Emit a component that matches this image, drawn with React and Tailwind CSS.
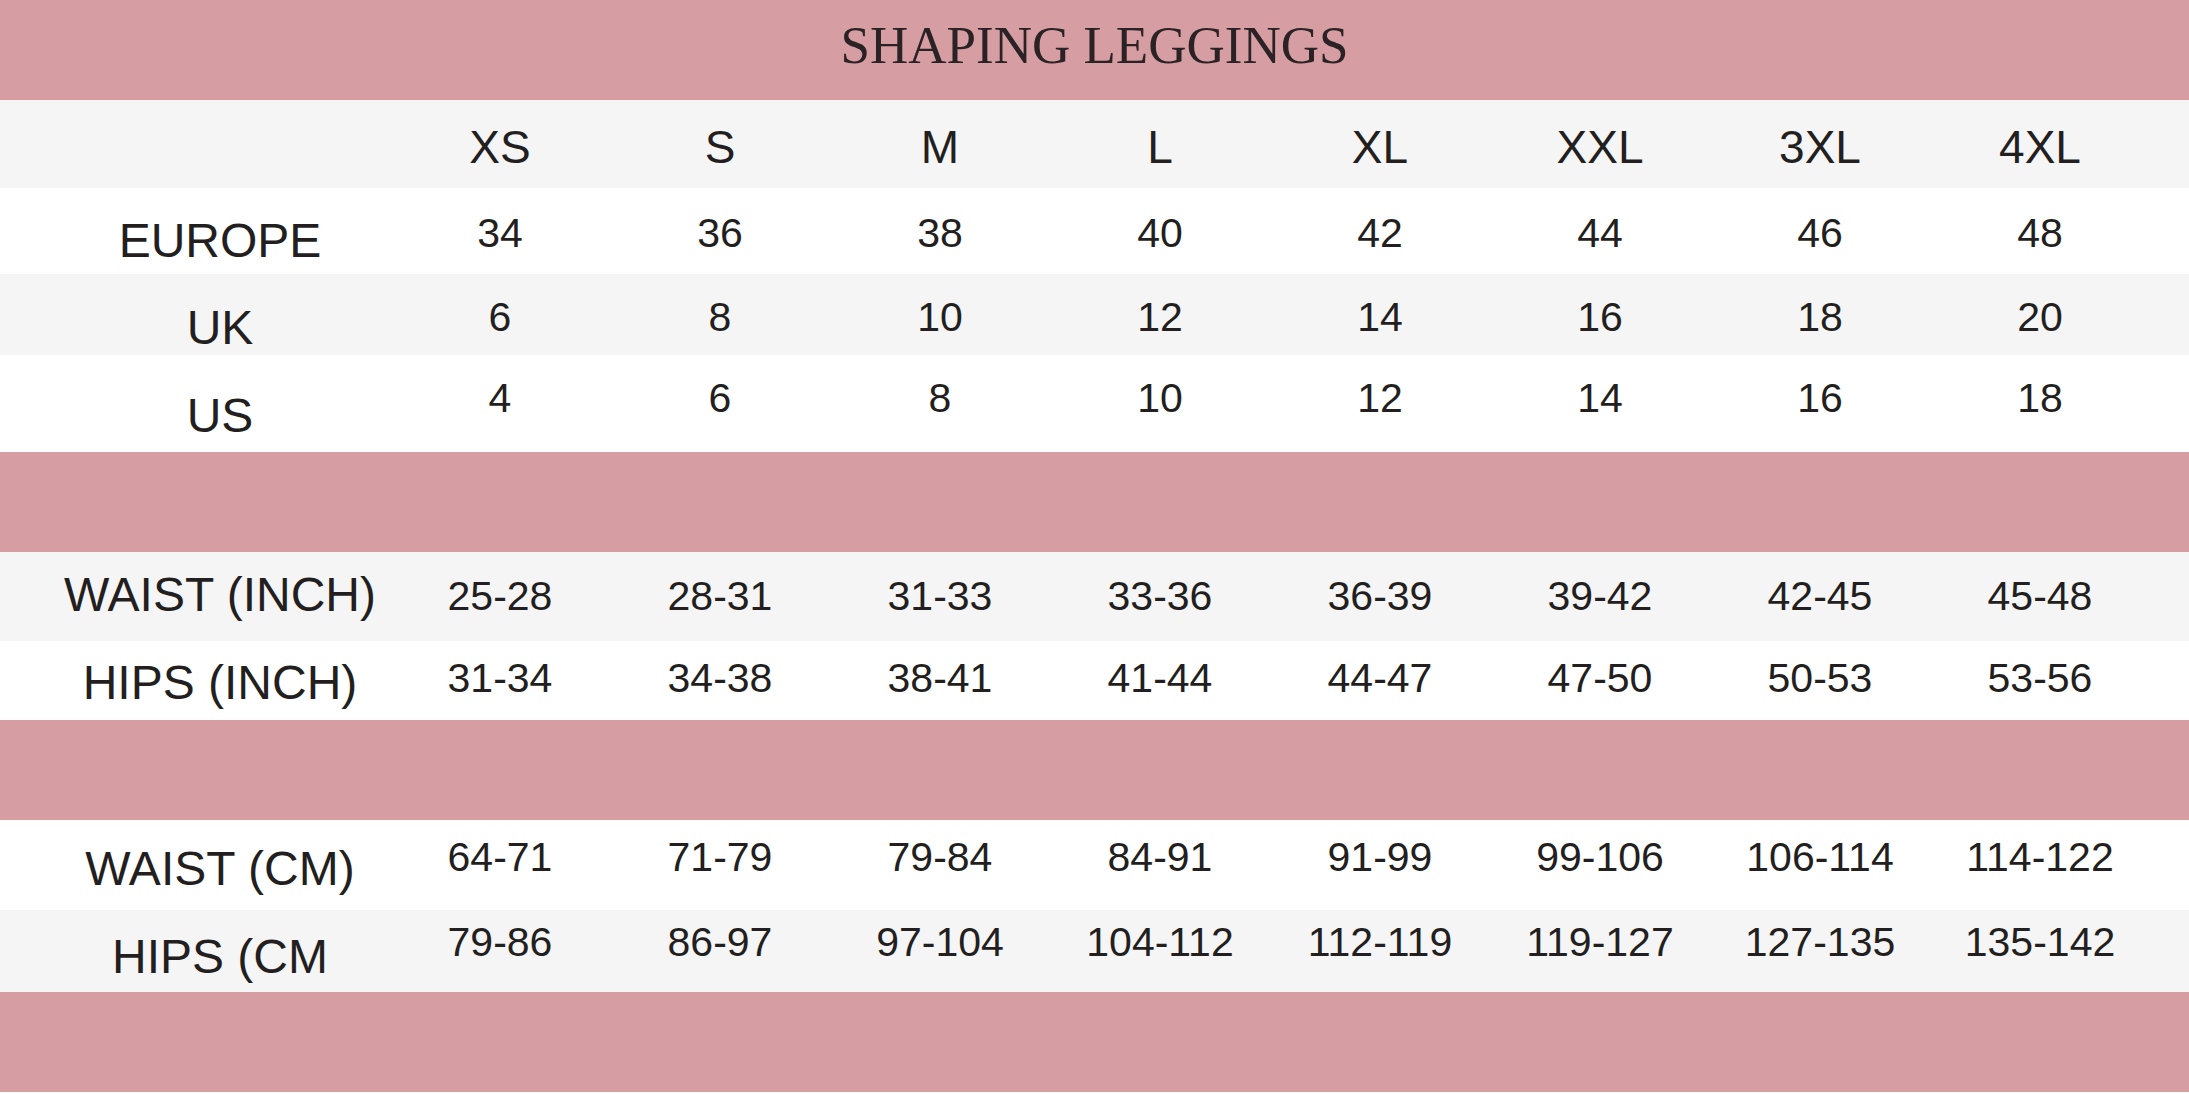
const sizes = ["XS", "S", "M", "L", "XL", "XXL", "3XL", "4XL"];

// pt values tuned so labels sit a little lower than the numbers, like the original chart
const groups = [
  [
    { label: "EUROPE", values: ["34", "36", "38", "40", "42", "44", "46", "48"], bg: "bg-white", h: "h-[86px]", lpt: "pt-[29px]", vpt: "pt-[25px]" },
    { label: "UK", values: ["6", "8", "10", "12", "14", "16", "18", "20"], bg: "bg-[#f5f5f5]", h: "h-[81px]", lpt: "pt-[30px]", vpt: "pt-[23px]" },
    { label: "US", values: ["4", "6", "8", "10", "12", "14", "16", "18"], bg: "bg-white", h: "h-[97px]", lpt: "pt-[37px]", vpt: "pt-[23px]" },
  ],
  [
    { label: "WAIST (INCH)", values: ["25-28", "28-31", "31-33", "33-36", "36-39", "39-42", "42-45", "45-48"], bg: "bg-[#f5f5f5]", h: "h-[89px]", lpt: "pt-[19px]", vpt: "pt-[24px]" },
    { label: "HIPS (INCH)", values: ["31-34", "34-38", "38-41", "41-44", "44-47", "47-50", "50-53", "53-56"], bg: "bg-white", h: "h-[79px]", lpt: "pt-[18px]", vpt: "pt-[17px]" },
  ],
  [
    { label: "WAIST (CM)", values: ["64-71", "71-79", "79-84", "84-91", "91-99", "99-106", "106-114", "114-122"], bg: "bg-white", h: "h-[90px]", lpt: "pt-[25px]", vpt: "pt-[17px]" },
    { label: "HIPS (CM", values: ["79-86", "86-97", "97-104", "104-112", "112-119", "119-127", "127-135", "135-142"], bg: "bg-[#f5f5f5]", h: "h-[82px]", lpt: "pt-[23px]", vpt: "pt-[12px]" },
  ],
];

function Row({ row }) {
  return (
    <div className={`grid grid-cols-[390px_repeat(8,220px)] ${row.bg} ${row.h}`}>
      <div className={`pl-[50px] text-center text-[48px] leading-none whitespace-nowrap ${row.lpt}`}>
        {row.label}
      </div>
      {row.values.map((v, i) => (
        <div key={i} className={`text-center text-[41px] leading-none whitespace-nowrap ${row.vpt}`}>
          {v}
        </div>
      ))}
    </div>
  );
}

function Band({ children }) {
  return (
    <div className="h-[100px] bg-[#d69ea2] flex justify-center">{children}</div>
  );
}

export default function App() {
  return (
    <div
      className="w-[2189px] h-[1094px] overflow-hidden bg-white text-[#231f20]"
      style={{ fontFamily: '"Liberation Sans", Arial, sans-serif' }}
    >
      {/* Title */}
      <Band>
        <h1
          className="pt-[19px] text-[53px] leading-none font-normal text-[#2a2224] whitespace-nowrap"
          style={{ fontFamily: '"Liberation Serif", "Times New Roman", serif' }}
        >
          SHAPING LEGGINGS
        </h1>
      </Band>

      {/* Size header */}
      <div className="grid grid-cols-[390px_repeat(8,220px)] bg-[#f5f5f5] h-[88px]">
        <div />
        {sizes.map((s) => (
          <div key={s} className="pt-[24px] text-center text-[46px] leading-none">
            {s}
          </div>
        ))}
      </div>

      {groups.map((g, gi) => (
        <div key={gi}>
          {g.map((row) => (
            <Row key={row.label} row={row} />
          ))}
          <Band />
        </div>
      ))}
    </div>
  );
}
